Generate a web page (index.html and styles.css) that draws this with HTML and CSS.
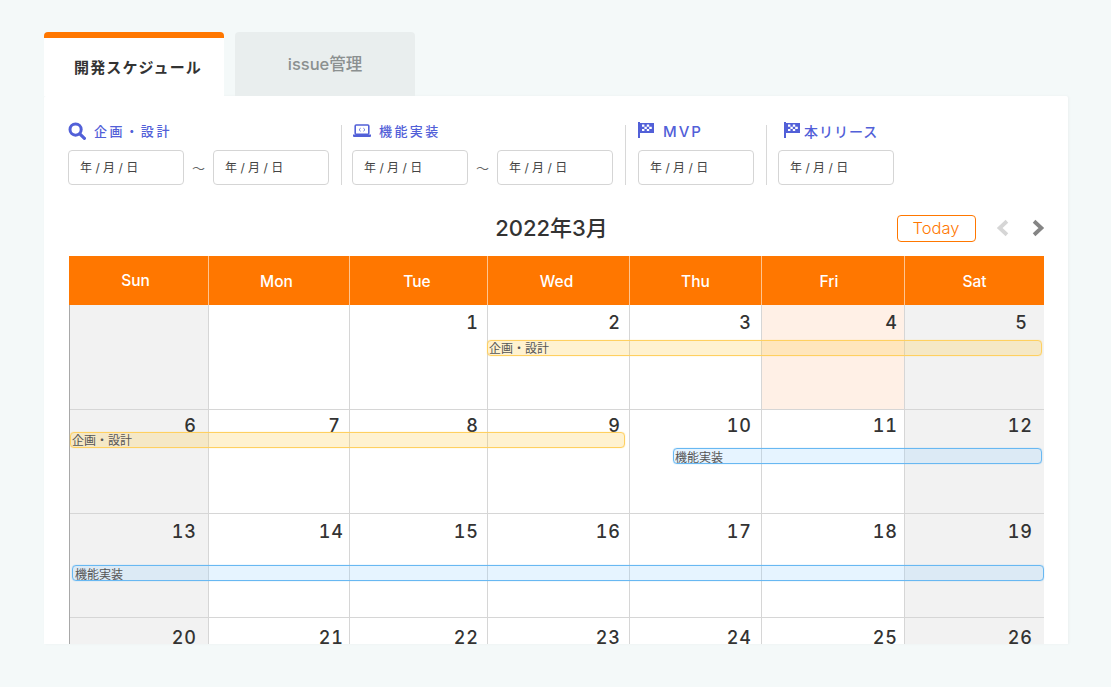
FILE: index.html
```html
<!DOCTYPE html>
<html lang="ja">
<head>
<meta charset="utf-8">
<title>開発スケジュール</title>
<link rel="stylesheet" href="styles.css">
</head>
<body>
<svg class="defs" width="0" height="0" aria-hidden="true">
  <defs>
    <symbol id="flag" viewBox="0 0 16 16">
      <path fill="#5260d8" d="M0 0h2v16H0zM2 1h14v10H2z"/>
      <path fill="#fff" d="M4 2.5h2.4v2.2H4zM8.8 2.5h2.4v2.2H8.8zM6.4 4.7h2.4v2.2H6.4zM11.2 4.7h2.6v2.2h-2.6zM4 6.9h2.4v2.2H4zM8.8 6.9h2.4v2.2H8.8z"/>
    </symbol>
  </defs>
</svg>
<main class="page">
  <nav class="tabs">
    <div class="tab tab-active">開発スケジュール</div>
    <div class="tab tab-idle">issue管理</div>
  </nav>
  <section class="panel">
    <div class="filters">
      <div class="group">
        <div class="label label-plan">
          <svg class="icon-search" viewBox="0 0 18 18"><circle cx="7.6" cy="7.6" r="5.6" fill="none" stroke="#5260d8" stroke-width="3"/><path d="M11.8 11.8l4.6 4.6" stroke="#5260d8" stroke-width="3.2" stroke-linecap="round"/></svg>
          <span>企画・設計</span>
        </div>
        <div class="dates">
          <div class="date">年 / 月 / 日</div><span class="tilde">～</span><div class="date">年 / 月 / 日</div>
        </div>
      </div>
      <div class="group">
        <div class="label label-dev">
          <svg class="icon-laptop" viewBox="0 0 18 14"><rect x="2.2" y="1" width="13.6" height="9.2" rx="1" fill="none" stroke="#5260d8" stroke-width="1.6"/><path d="M0 10.6h18v1.4a1 1 0 0 1-1 1H1a1 1 0 0 1-1-1z" fill="#5260d8"/><path d="M7.6 4.2L6 5.7l1.6 1.5M10.4 4.2L12 5.7l-1.6 1.5" fill="none" stroke="#5260d8" stroke-width=".9"/></svg>
          <span>機能実装</span>
        </div>
        <div class="dates">
          <div class="date">年 / 月 / 日</div><span class="tilde">～</span><div class="date">年 / 月 / 日</div>
        </div>
      </div>
      <div class="group">
        <div class="label label-mvp">
          <svg class="icon-flag"><use href="#flag"/></svg>
          <span>MVP</span>
        </div>
        <div class="dates"><div class="date">年 / 月 / 日</div></div>
      </div>
      <div class="group group-last">
        <div class="label label-rel">
          <svg class="icon-flag"><use href="#flag"/></svg>
          <span>本リリース</span>
        </div>
        <div class="dates"><div class="date">年 / 月 / 日</div></div>
      </div>
    </div>

    <div class="toolbar">
      <h1 class="month">2022年3月</h1>
      <div class="controls">
        <button class="today">Today</button>
        <svg class="chev chev-prev" viewBox="0 0 12 16"><path d="M9.5 2L3 8l6.500 6" fill="none" stroke="#d6d6d6" stroke-width="3.400"/></svg>
        <svg class="chev chev-next" viewBox="0 0 12 16"><path d="M2.500 2L9 8l-6.500 6" fill="none" stroke="#858585" stroke-width="3.400"/></svg>
      </div>
    </div>

    <div class="calendar">
      <div class="head">
        <div class="hcell">Sun</div><div class="hcell">Mon</div><div class="hcell">Tue</div><div class="hcell">Wed</div><div class="hcell">Thu</div><div class="hcell">Fri</div><div class="hcell">Sat</div>
      </div>
      <div class="week">
        <div class="day off"></div><div class="day"></div><div class="day">1</div><div class="day">2</div><div class="day">3</div><div class="day today-cell">4</div><div class="day off">5</div>
        <div class="event plan ev1">企画・設計</div>
      </div>
      <div class="week">
        <div class="day off">6</div><div class="day">7</div><div class="day">8</div><div class="day">9</div><div class="day">10</div><div class="day">11</div><div class="day off">12</div>
        <div class="event plan ev2">企画・設計</div>
        <div class="event dev ev3">機能実装</div>
      </div>
      <div class="week">
        <div class="day off">13</div><div class="day">14</div><div class="day">15</div><div class="day">16</div><div class="day">17</div><div class="day">18</div><div class="day off">19</div>
        <div class="event dev ev4">機能実装</div>
      </div>
      <div class="week">
        <div class="day off">20</div><div class="day">21</div><div class="day">22</div><div class="day">23</div><div class="day">24</div><div class="day">25</div><div class="day off">26</div>
      </div>
    </div>
  </section>
</main>
</body>
</html>
```
FILE: styles.css
```css
* { box-sizing: border-box; }
html, body { margin: 0; height: 100%; }
body {
  background: #f4f9f9;
  color: #333;
  font-family: Inter, "Noto Sans CJK JP", sans-serif;
  overflow: hidden;
}
.defs { position: absolute; }
.page { padding: 32px 43px 0 44px; }

.tabs { display: flex; gap: 11px; height: 64px; }
.tab {
  width: 180px;
  display: flex;
  justify-content: center;
  border-radius: 4px 4px 0 0;
}
.tab-active {
  background: #fff;
  border-top: 6px solid #ff7700;
  align-items: center;
  font-size: 15px;
  font-weight: 700;
  letter-spacing: 1.1px;
  color: #333;
  padding: 0 0 2px 8px;
}
.tab-idle {
  background: #e9eeee;
  align-items: flex-start;
  font-size: 16.500px;
  font-weight: 500;
  color: #8b9090;
  padding-top: 19px;
}

.panel {
  background: #fff;
  height: 548px;
  overflow: hidden;
  padding: 24px 24px 0 25px;
  box-shadow: 1px 0 3px rgba(0, 0, 0, .04);
  border-radius: 2px 2px 0 0;
}

.filters { display: flex; }
.group {
  display: flex;
  flex-direction: column;
  padding-right: 12px;
  margin-right: 10px;
  border-right: 1px solid #d8d8d8;
  height: 60px;
  margin-top: 5px;
}
.group:nth-child(2) { margin-right: 12px; }
.group:nth-child(3) { margin-right: 11px; }
.group-last { border-right: 0; padding: 0; margin-right: 0; }
.group:first-child { margin-left: -1px; }

.label {
  height: 25px;
  margin-top: -7px;
  display: flex;
  align-items: center;
  font-size: 13px;
  font-weight: 500;
  letter-spacing: 2.600px;
  color: #5260d8;
  white-space: nowrap;
}
.icon-search { width: 18px; height: 18px; margin-right: 8px; }
.icon-laptop { width: 18px; height: 14px; margin: 0 8px 0 1px; }
.label-dev { letter-spacing: 2.400px; }
.icon-flag { width: 16px; height: 16px; margin-right: 9px; margin-bottom: 2px; flex: none; }
.label-rel .icon-flag { margin-right: 4px; margin-left: 6px; }
.label-rel { font-size: 14px; letter-spacing: 1px; }
.label-mvp { font-size: 15px; letter-spacing: 2px; padding-top: 2px; }
.label-mvp .icon-flag { margin-bottom: 4px; }

.dates { display: flex; align-items: center; margin-top: 7px; }
.date {
  width: 116px;
  height: 35px;
  flex: none;
  border: 1px solid #d5d5d5;
  border-radius: 4px;
  font-size: 12px;
  line-height: 33px;
  padding-left: 11px;
  color: #444;
  white-space: nowrap;
}
.tilde {
  width: 29px;
  text-align: center;
  font-size: 13px;
  color: #666;
}

.toolbar {
  margin-top: 25px;
  height: 27px;
  display: grid;
  grid-template-columns: 1fr auto 1fr;
  align-items: center;
  width: 975px;
}
.month {
  grid-column: 2;
  margin: 0 10px 4px 0;
  font-size: 22px;
  font-weight: 500;
  color: #333;
  white-space: nowrap;
}
.controls {
  grid-column: 3;
  display: flex;
  justify-content: flex-end;
  align-items: center;
  margin-right: -1px;
}
.today {
  width: 79px;
  height: 27px;
  padding: 0 1px 0 0;
  background: #fff;
  border: 1px solid #ff7700;
  border-radius: 4px;
  color: #ff7700;
  font: 300 16.500px Inter, sans-serif;
}
.chev { width: 14px; height: 18px; display: block; }
.chev-prev { margin-left: 20px; }
.chev-next { margin-left: 21px; }

.calendar {
  margin-top: 19px;
  width: 975px;
  border-right: 1px solid #8a8a8a;
  border-left: 1px solid #a8a8a8;
}
.head, .week {
  display: grid;
  grid-template-columns: 139px 141px 138px 142px 132px 143px 139px;
}
.head {
  height: 49px;
  background: #ff7700;
  margin: 0 -1px;
  grid-template-columns: 140px 141px 138px 142px 132px 143px 139px;
}
.hcell {
  color: #fff;
  font-size: 15.500px;
  font-weight: 500;
  display: flex;
  align-items: center;
  justify-content: center;
  border-right: 1px solid #ffc48f;
  padding-top: 2px;
}
.hcell:nth-child(1) { padding: 0 6px 0 0; }
.hcell:nth-child(2) { padding-right: 5px; }
.hcell:nth-child(3) { padding-right: 3px; }
.hcell:nth-child(4) { padding-right: 4px; }
.hcell:nth-child(6) { padding-right: 8px; }
.hcell:last-child { border-right: 0; }

.week { position: relative; height: 104px; }
.week:nth-child(2) { height: 105px; }
.day {
  border-right: 1px solid #d6d6d6;
  border-bottom: 1px solid #d6d6d6;
  text-align: right;
  font-size: 18px;
  font-weight: 500;
  font-variant-numeric: tabular-nums;
  line-height: 22px;
  padding-top: 7px;
  color: #333;
  letter-spacing: 1px;
}
.week:nth-child(3) .day { padding-top: 5px; }
.week:nth-child(5) .day { padding-top: 9px; }
.day:nth-child(7) { border-right: 0; padding-right: 11px; }
.day:nth-child(1) { padding-right: 11px; }
.day:nth-child(2) { padding-right: 5px; }
.day:nth-child(3) { padding-right: 8px; }
.day:nth-child(4) { padding-right: 8px; }
.day:nth-child(5) { padding-right: 9px; }
.day:nth-child(6) { padding-right: 6px; }
.week:nth-child(2) .day:nth-child(7) { padding-right: 16px; }
.week:nth-child(3) .day:nth-child(2) { padding-right: 8px; }
.off { background: #f2f2f2; }
.today-cell { background: #fff0e6; }

.event {
  position: absolute;
  height: 16px;
  border-radius: 4px;
  font-size: 12px;
  line-height: 16px;
  padding-left: 1px;
  color: #555;
  white-space: nowrap;
}
.plan {
  background: rgba(255, 200, 60, .24);
  border: 1px solid #ffd060;
  box-shadow: 0 0 1px #ffd060;
}
.dev {
  background: rgba(150, 210, 255, .24);
  border: 1px solid #68b8f2;
  box-shadow: 0 0 1px #68b8f2;
  line-height: 17px;
}
.ev1 { left: 417px; width: 555px; top: 35px; }
.ev2 { left: 0; width: 555px; top: 22px; }
.ev3 { left: 603px; width: 369px; top: 38px; }
.ev4 { left: 2px; width: 972px; top: 51px; padding-left: 2px; }
```
